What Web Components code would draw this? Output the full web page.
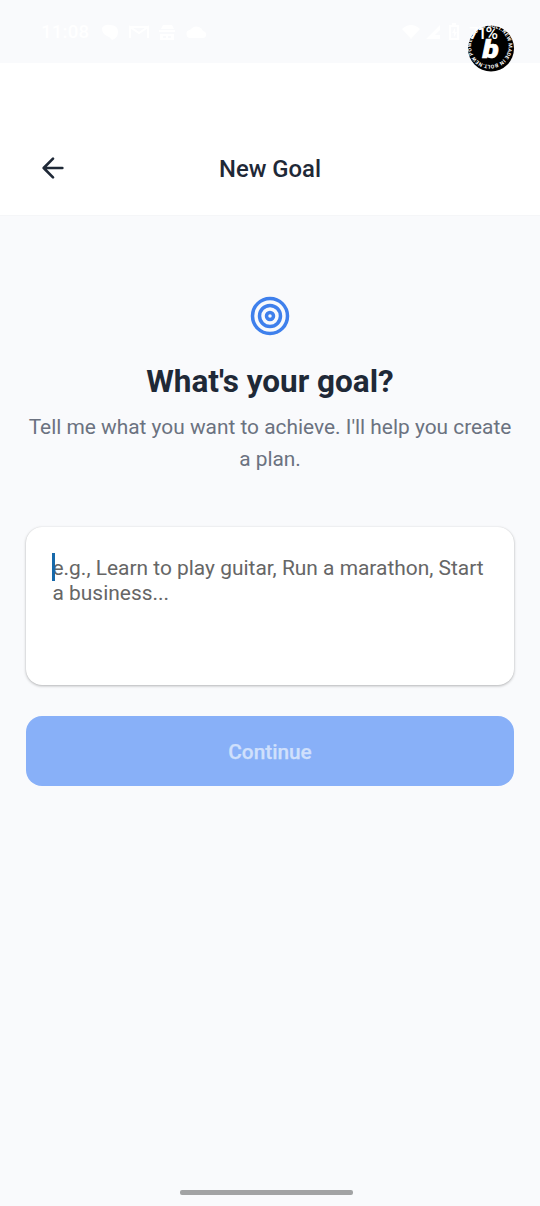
<!DOCTYPE html>
<html lang="en"><head><meta charset="utf-8"><title>New Goal</title>
<style>html,body{margin:0;height:100%;background:#f9fafc;font-family:Roboto,sans-serif}body{overflow:hidden}</style></head>
<body><goal-screen></goal-screen>
<script>
const define=(name,html)=>customElements.define(name,class extends HTMLElement{
  constructor(){super();this.attachShadow({mode:'open'}).innerHTML=html;}
});
define('status-bar',`<style>
:host{display:flex;height:63px;box-sizing:border-box;padding:0 0 0 41px;background:#f9fafc;color:#fff;align-items:center;position:relative}
time{font:500 18.6px/20px Roboto,sans-serif;width:50px;letter-spacing:.2px}
svg{display:block;fill:#fff}.l{margin-left:8.5px}.r{margin-left:194px}
</style><time>11:08</time>
<svg class="l" width="108" height="22" viewBox="0 0 108 22"><path d="M2 7q3-4 8-3q8 0 8 7q0 6-6 8q-2-3-5-4q-5-2-5-8"/><path d="M30 17V6l9 6 9-6v11M30 6h18" fill="none" stroke="#fff" stroke-width="2"/><path d="M59 9h16v2H59zM63 4h9l2 4H61zM60 13h14v6H60zm3 2v2h3v-2zm5 0v2h3v-2z" fill-rule="evenodd"/><path d="M91 17a4 4 0 0 1-1-8q4-5 9-3 3 1 4 4 4 1 3 5-1 2-3 2z"/></svg>
<svg class="r" width="60" height="22" viewBox="0 0 60 22"><path d="M0 8q9-8 18 0L9 18zM24 18 38 4v5l-5 5h5v4zM47 4h3V2h4v2h3v15H47zm2 2v11h6V6z" fill-rule="evenodd"/><path d="m53 7-3 5h2v4l3-5h-2z"/></svg>`);
define('bolt-badge',`<style>:host{display:block;position:absolute;left:468px;top:25px;width:46px;height:47px}svg{display:block;overflow:visible}text{font-family:Roboto,sans-serif;fill:#fff}</style>
<svg width="46" height="47" viewBox="0 0 46 47"><circle cx="23" cy="23.5" r="23" fill="#000"/>
<defs><path id="ring" d="M5.2 29.5a18.7 18.7 0 1 1 .01 .02"/></defs>
<text font-size="5.2" font-weight="700"><textPath href="#ring" textLength="115">POWERED BY BOLT.NEW MADE IN BOLT.NEW</textPath></text>
<text transform="translate(14.5 33) scale(1.15 1)" font-size="26" font-weight="900" font-style="italic" stroke="#fff" stroke-width=".7">b</text>
<text x="1" y="13.5" font-size="17" font-weight="500" textLength="29">71%</text></svg>`);
define('app-header',`<style>
:host{display:grid;grid-template-columns:64px 1fr 64px;align-items:center;height:153px;box-sizing:border-box;padding:58px 20px 0;background:#fff;border-bottom:1px solid #f5f6f8}
svg{display:block;margin-left:16.5px}h1{margin:0;padding-top:2px;text-align:center;font:500 23.85px/30px Roboto,sans-serif;color:#1f2937}
</style><svg width="32" height="32" viewBox="0 0 24 24" fill="none" stroke="#1f2937" stroke-width="2" stroke-linecap="round" stroke-linejoin="round"><path d="m12 19-7-7 7-7M19 12H5"/></svg><h1><slot></slot></h1>`);
define('goal-intro',`<style>
:host{display:flex;flex-direction:column;align-items:center;text-align:center}
svg{display:block}h2{margin:24px 0 0;font:700 31.5px/42px Roboto,sans-serif;color:#1f2937}
p{margin:9px 0 0;font:400 20.88px/31.5px Roboto,sans-serif;color:#6b7280;white-space:nowrap}
</style><svg width="42" height="42" viewBox="0 0 24 24" fill="none" stroke="#3f80ec" stroke-width="2"><circle cx="12" cy="12" r="10"/><circle cx="12" cy="12" r="6"/><circle cx="12" cy="12" r="2"/></svg>
<h2>What's your goal?</h2><p>Tell me what you want to achieve. I'll help you create<br>a plan.</p>`);
define('goal-input',`<style>
:host{display:block;position:relative;box-sizing:border-box;height:157.5px;margin-top:52px;padding:28.5px 26.5px;border-radius:16px;background:#fff;box-shadow:0 1px 3px rgba(0,0,0,.28),0 0 1px rgba(0,0,0,.1);font:400 20.93px/25px Roboto,sans-serif;color:#666;white-space:nowrap}
i{position:absolute;left:26px;top:26px;width:3px;height:28px;background:#1769aa}
</style><slot></slot><i></i>`);
define('primary-button',`<style>
:host{display:block;margin-top:31.5px}button{display:block;width:100%;height:70px;padding:2px 0 0;border:0;border-radius:16px;background:#88b0f8;color:#d0e0fc;font:500 20.8px/26px Roboto,sans-serif;-webkit-text-stroke:.25px #d0e0fc}
</style><button><slot></slot></button>`);
define('home-handle',`<style>:host{display:block;width:173px;height:5px;border-radius:2px;background:#a2a3a4;margin:auto auto 11px 180px}</style>`);
define('goal-screen',`<style>
:host{display:flex;flex-direction:column;height:1206px;width:540px;position:relative;background:#f9fafc}main{padding:79px 26px 0}
</style><status-bar></status-bar><app-header>New Goal</app-header><main><goal-intro></goal-intro><goal-input>e.g., Learn to play guitar, Run a marathon, Start<br>a business...</goal-input><primary-button>Continue</primary-button></main><home-handle></home-handle><bolt-badge></bolt-badge>`);
</script></body></html>
